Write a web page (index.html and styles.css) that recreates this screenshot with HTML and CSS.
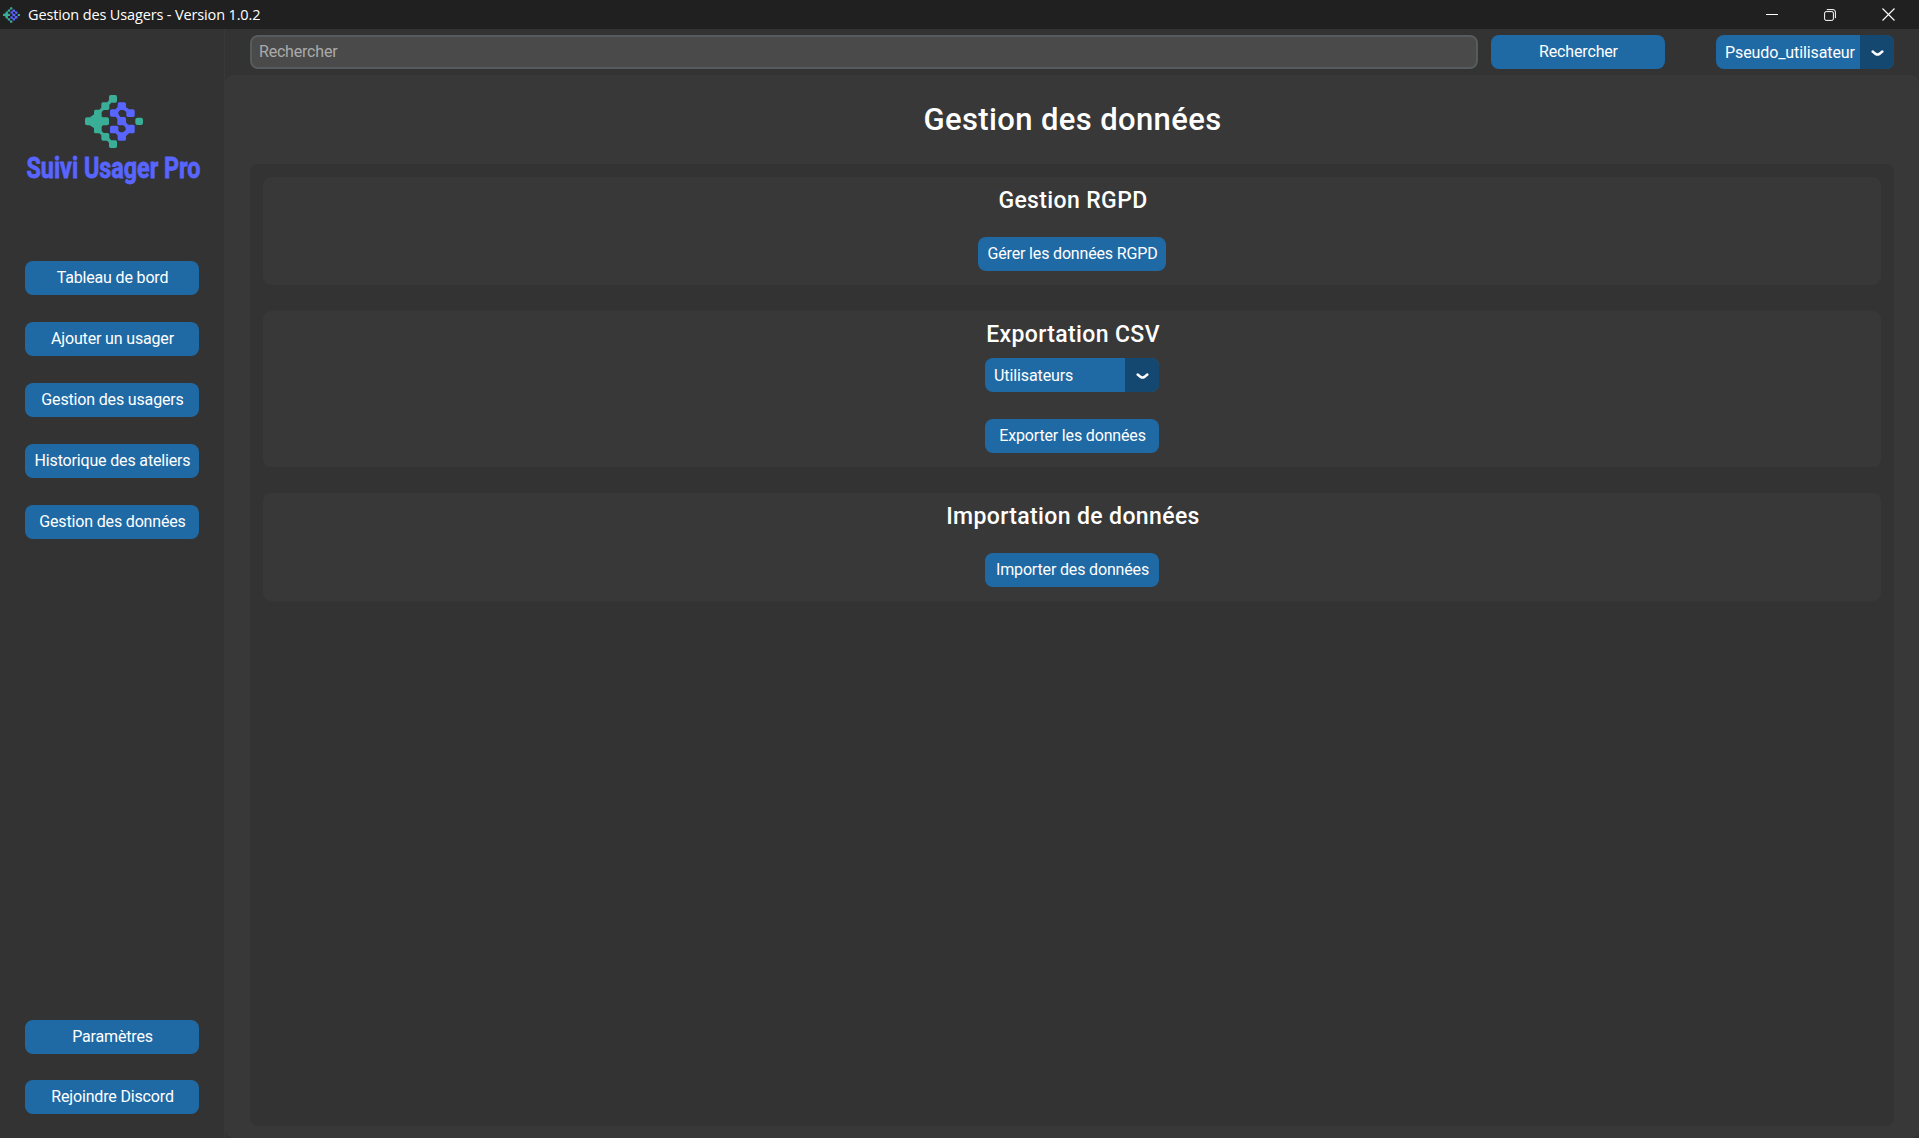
FILE: index.html
```html
<!DOCTYPE html>
<html lang="fr">
<head>
<meta charset="utf-8">
<title>Gestion des Usagers</title>
<link rel="stylesheet" href="styles.css">
</head>
<body>
<svg width="0" height="0" class="defs">
  <symbol id="mark" viewBox="0 0 174 159">
    <g fill="#3aae97">
      <rect x="72" y="0" width="24" height="23" rx="5"/><rect x="49" y="22" width="24" height="23" rx="5"/>
      <rect x="27" y="44" width="23" height="71" rx="5"/><rect x="0" y="67" width="72" height="24" rx="6"/>
      <rect x="49" y="114" width="24" height="23" rx="5"/><rect x="72" y="136" width="24" height="23" rx="5"/>
      <rect x="151" y="68" width="23" height="22" rx="6"/>
      <path d="M66 22l6-6 7 7-6 6zM43 44l6-6 7 7-6 6zM43 115l6 6 7-7-6-6zM66 137l6 6 7-7-6-6zM44 60l12 10H44zM44 99l12-10H44zM14 67l14-9v12zM14 91l14 9V88z"/>
    </g>
    <g fill="#5865ff">
      <rect x="98" y="22" width="25" height="23" rx="5"/><rect x="75" y="43" width="25" height="22" rx="5"/>
      <rect x="124" y="43" width="25" height="23" rx="5"/><rect x="97" y="66" width="26" height="25" rx="5"/>
      <rect x="75" y="92" width="25" height="23" rx="5"/><rect x="122" y="89" width="27" height="26" rx="5"/>
      <rect x="98" y="112" width="25" height="25" rx="5"/>
      <path d="M91 43l8-8 9 8-8 8zM113 43l8-8 11 8-8 8zM91 64l8-8 8 11-8 7zM115 90l8-8 8 10-8 7zM91 113l8-7 8 8-8 8zM113 113l9-8 10 10-9 8z"/>
    </g>
  </symbol>
  <symbol id="chevron" viewBox="0 0 13 7">
    <path d="M1.7 1.6L4.6 3.9Q6.5 5.2 8.4 3.9L11.3 1.6" fill="none" stroke="#fff" stroke-width="2.5" stroke-linecap="round"/>
  </symbol>
</svg>
<header class="titlebar">
  <svg class="app-icon"><use href="#mark"/></svg>
  <span class="app-title">Gestion des Usagers - Version 1.0.2</span>
  <div class="window-controls">
    <svg width="12" height="12" viewBox="0 0 12 12"><path d="M0 5.5h12" stroke="#fff"/></svg>
    <svg width="12" height="12" viewBox="0 0 12 12" fill="none" stroke="#fff"><rect x=".6" y="2.6" width="8.8" height="8.8" rx="1.5"/><path d="M2.8.6H9Q11.4.6 11.4 3v6.2"/></svg>
    <svg width="13" height="13" viewBox="0 0 13 13"><path d="M.5.5l12 12M12.5.5l-12 12" stroke="#fff" stroke-width="1.1"/></svg>
  </div>
</header>
<div class="app">
  <aside class="sidebar">
    <div class="logo">
      <svg class="logo-mark"><use href="#mark"/></svg>
      <svg class="logo-name" width="176" height="32" viewBox="0 0 176 32"><text x="1.5" y="23.5" textLength="174" lengthAdjust="spacingAndGlyphs">Suivi Usager Pro</text></svg>
    </div>
    <nav class="nav">
      <button class="btn">Tableau de bord</button>
      <button class="btn">Ajouter un usager</button>
      <button class="btn">Gestion des usagers</button>
      <button class="btn">Historique des ateliers</button>
      <button class="btn">Gestion des données</button>
    </nav>
    <div class="nav nav-bottom">
      <button class="btn">Paramètres</button>
      <button class="btn">Rejoindre Discord</button>
    </div>
  </aside>
  <div class="content">
    <div class="topbar">
      <input class="search" type="text" placeholder="Rechercher">
      <button class="btn">Rechercher</button>
      <div class="select user"><span class="value">Pseudo_utilisateur</span><span class="arrow"><svg width="13" height="7"><use href="#chevron"/></svg></span></div>
    </div>
    <div class="main-wrap">
      <main class="main">
        <h1>Gestion des données</h1>
        <div class="panel">
          <section class="card">
            <h2>Gestion RGPD</h2>
            <button class="btn wide">Gérer les données RGPD</button>
          </section>
          <section class="card export">
            <h2>Exportation CSV</h2>
            <div class="select"><span class="value">Utilisateurs</span><span class="arrow"><svg width="13" height="7"><use href="#chevron"/></svg></span></div>
            <button class="btn">Exporter les données</button>
          </section>
          <section class="card">
            <h2>Importation de données</h2>
            <button class="btn">Importer des données</button>
          </section>
        </div>
      </main>
    </div>
  </div>
</div>
</body>
</html>
```
FILE: styles.css
```css
* { box-sizing: border-box; }
body {
  margin: 0;
  height: 1138px;
  display: flex;
  flex-direction: column;
  overflow: hidden;
  background: #333;
  color: #fff;
  font-family: Roboto, "Liberation Sans", sans-serif;
  font-size: 16px;
}
.defs { position: absolute; }
svg { display: block; }
.titlebar {
  height: 29px;
  flex: none;
  display: flex;
  align-items: center;
  padding: 0 24px 0 3px;
  background: #202020;
}
.app-icon { width: 17px; height: 16px; }
.app-title {
  margin-left: 8px;
  font: 14.5px/29px "Open Sans", "Noto Sans", sans-serif;
  letter-spacing: -0.14px;
}
.window-controls { margin-left: auto; display: flex; align-items: center; gap: 46px; }
.app { flex: 1; display: flex; min-height: 0; }
.sidebar {
  width: 225px;
  display: flex;
  flex-direction: column;
  padding: 66px 25px 24px;
  border-right: 1px solid #383838;
}
.logo { height: 166px; }
.logo-mark { width: 58px; height: 53px; margin-left: 60px; }
.logo-name { margin: 6px 0 0; overflow: visible; }
.logo-name text { font: bold 29.5px Roboto, sans-serif; fill: #5865ff; stroke: #5865ff; stroke-width: .8px; }
.nav { display: flex; flex-direction: column; gap: 27px; }
.nav-bottom { margin-top: auto; gap: 26px; }
.btn {
  width: 174px;
  height: 34px;
  flex: none;
  padding: 0 0 1px 1px;
  border: 0;
  border-radius: 8px;
  background: #1f6aa5;
  color: #fff;
  font: 16px Roboto, sans-serif;
  letter-spacing: -0.16px;
  white-space: nowrap;
}
.wide { width: 188px; }
.content { flex: 1; display: flex; flex-direction: column; }
.topbar {
  height: 46px;
  flex: none;
  display: flex;
  padding: 6px 25px 0;
}
.search {
  flex: 1;
  height: 34px;
  margin-right: 13px;
  padding: 0 7px 1px;
  border: 2px solid #565b5e;
  border-radius: 8px;
  background: #4a4a4a;
  font: 16px Roboto, sans-serif;
  letter-spacing: -0.2px;
}
.search::placeholder { color: #aaa; opacity: 1; }
.select {
  width: 174px;
  height: 34px;
  flex: none;
  display: flex;
  overflow: hidden;
  border-radius: 8px;
  background: #1f6aa5;
  line-height: 36px;
  letter-spacing: -0.1px;
}
.value { flex: 1; padding-left: 9px; }
.arrow { width: 34px; display: flex; align-items: center; justify-content: center; padding: 2px 0 0 1px; background: #144870; }
.user { width: 178px; margin-left: 51px; }
.main-wrap { flex: 1; display: flex; }
.main {
  flex: 1;
  display: flex;
  flex-direction: column;
  padding: 0 25px 12px;
  border-radius: 8px;
  background: #383838;
}
h1, h2 { margin: 0; text-align: center; font-weight: 500; }
h1 { height: 89px; padding-left: 1px; font-size: 31px; line-height: 89px; letter-spacing: .37px; }
.panel {
  flex: 1;
  display: flex;
  flex-direction: column;
  gap: 26px;
  padding: 13px;
  border-radius: 8px;
  background: #333;
}
.card {
  height: 108px;
  display: flex;
  flex-direction: column;
  align-items: center;
  border-radius: 8px;
  background: #383838;
}
.card h2 { height: 60px; padding: 9px 0 0 2px; font-size: 23px; line-height: 30px; letter-spacing: .37px; }
.card.export { height: 156px; }
.export h2 { height: 47px; }
.export .btn { margin-top: 27px; }
```
